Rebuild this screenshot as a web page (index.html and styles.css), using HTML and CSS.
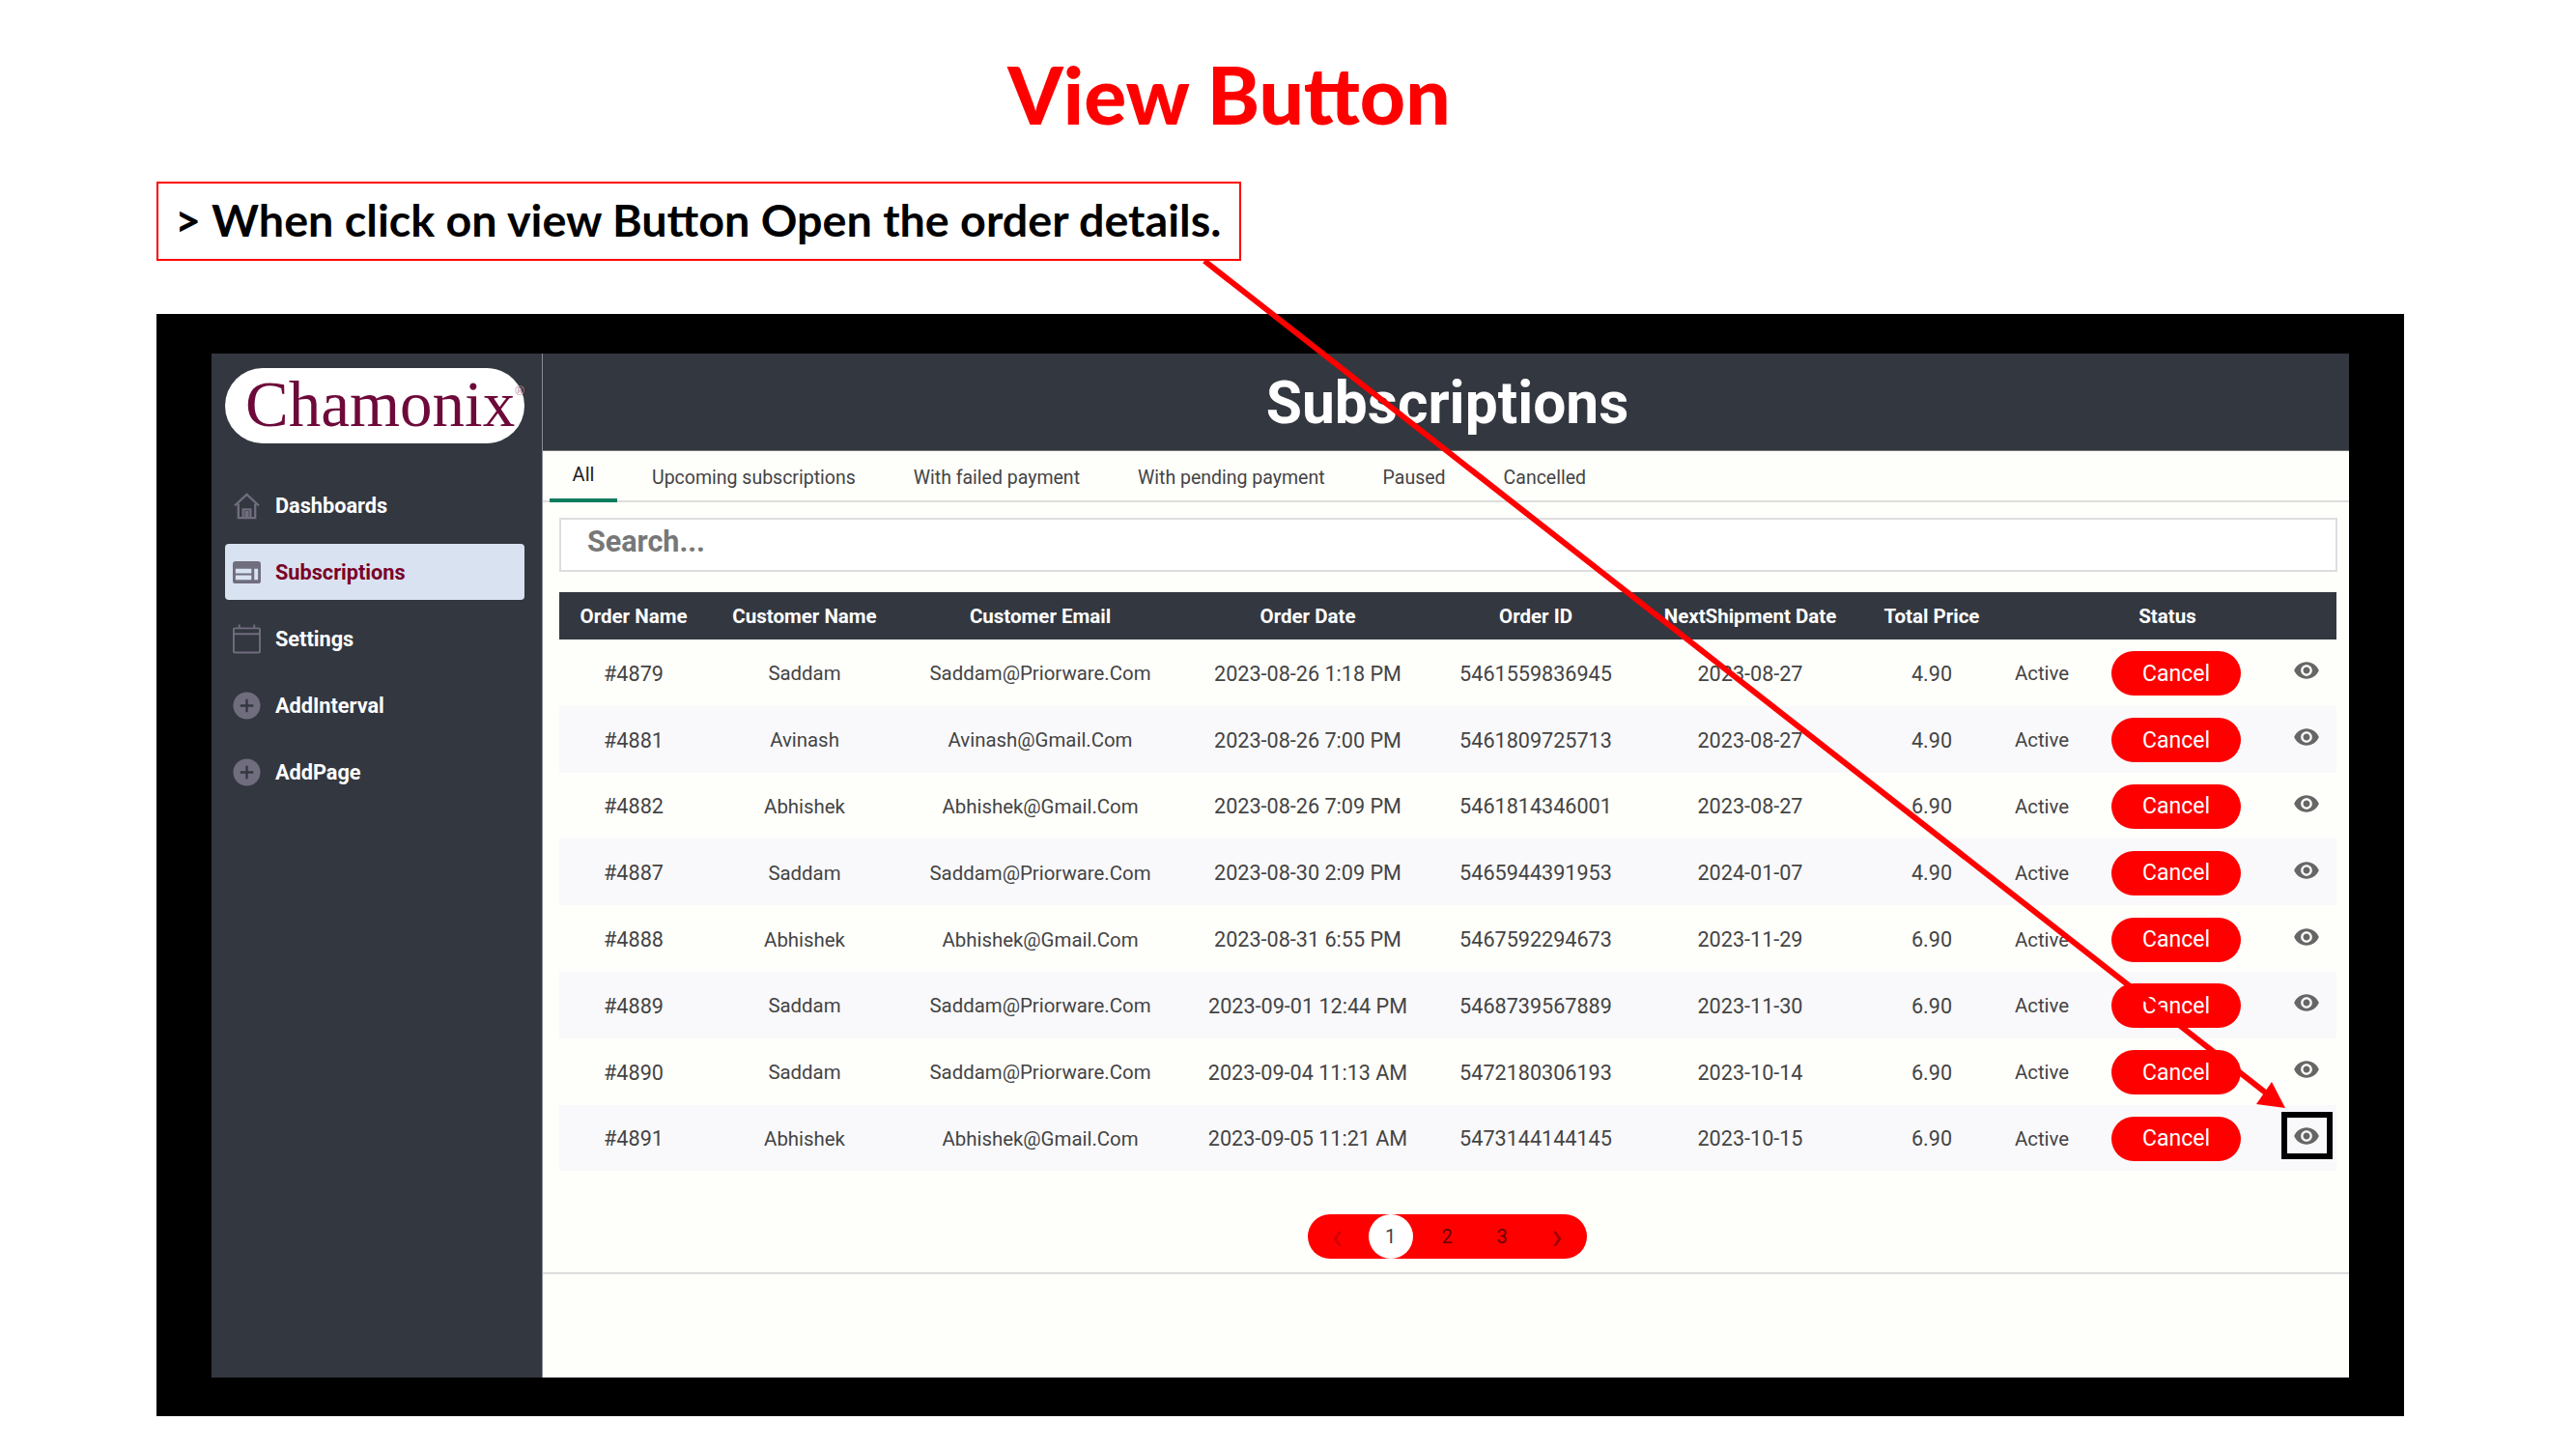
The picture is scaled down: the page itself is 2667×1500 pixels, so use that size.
FILE: index.html
```html
<!DOCTYPE html>
<html lang="en">
<head>
    <meta charset="UTF-8">
    <title>View Button</title>
    <link rel="stylesheet" href="styles.css">
</head>
<body>
<svg class="defs">
    <symbol id="eye" viewBox="0 0 24 24"><path d="M12 4.5C7 4.5 2.73 7.61 1 12c1.73 4.39 6 7.5 11 7.5s9.27-3.11 11-7.5c-1.73-4.39-6-7.5-11-7.5zM12 17c-2.76 0-5-2.24-5-5s2.24-5 5-5 5 2.24 5 5-2.24 5-5 5zm0-8c-1.66 0-3 1.34-3 3s1.34 3 3 3 3-1.34 3-3-1.34-3-3-3z"/></symbol>
    <symbol id="plus" viewBox="0 0 30 30"><circle cx="15" cy="15" r="14.5"/><path d="M15 8v14M8 15h14" stroke="#33373f" stroke-width="2.4"/></symbol>
</svg>

<h1 class="page-title">View Button</h1>
<p class="note">&gt; When click on view Button Open the order details.</p>

<div class="frame">
    <div class="app">
        <aside class="sidebar">
            <div class="logo">Chamonix<span class="reg">®</span></div>
            <ul class="nav">
                <li>
                    <svg class="nav-icon" viewBox="0 0 30 30"><path d="M2 15 15 3l13 12M6 13v15h18V13M11 28v-9h8v9M14 28v-6h2v6" fill="none" stroke="currentColor" stroke-width="2.4"/></svg>
                    Dashboards
                </li>
                <li class="active">
                    <svg class="nav-icon" viewBox="0 0 30 24"><rect width="30" height="24" rx="3"/><path d="M3 8h17v5H3zM3 15h17v5H3zM23 8h4v12h-4z" fill="#d9e2f1"/></svg>
                    Subscriptions
                </li>
                <li>
                    <svg class="nav-icon tall" viewBox="0 0 30 32"><path d="M2 5h26a1 1 0 0 1 1 1v24a1 1 0 0 1-1 1H2a1 1 0 0 1-1-1V6a1 1 0 0 1 1-1zM1 11h28M7 1v4M23 1v4" fill="none" stroke="currentColor" stroke-width="2"/></svg>
                    Settings
                </li>
                <li><svg class="nav-icon"><use href="#plus"/></svg> AddInterval</li>
                <li><svg class="nav-icon"><use href="#plus"/></svg> AddPage</li>
            </ul>
        </aside>

        <main class="main">
            <header class="main-head">Subscriptions</header>
            <nav class="tabs">
                <a class="tab current">All</a>
                <a class="tab">Upcoming subscriptions</a>
                <a class="tab">With failed payment</a>
                <a class="tab">With pending payment</a>
                <a class="tab">Paused</a>
                <a class="tab">Cancelled</a>
            </nav>
            <div class="content">
                <div class="search">Search...</div>
                <table class="orders">
                    <colgroup>
                        <col class="c-order"><col class="c-name"><col class="c-email"><col class="c-date"><col class="c-id">
                        <col class="c-next"><col class="c-total"><col class="c-state"><col class="c-btn"><col class="c-eye">
                    </colgroup>
                    <thead>
                        <tr>
                            <th>Order Name</th><th>Customer Name</th><th>Customer Email</th><th>Order Date</th><th>Order ID</th>
                            <th>NextShipment Date</th><th>Total Price</th><th></th><th class="status-head">Status</th><th></th>
                        </tr>
                    </thead>
                    <tbody>
                        <tr>
                            <td class="num">#4879</td><td>Saddam</td><td>Saddam@Priorware.Com</td><td class="num">2023-08-26 1:18 PM</td><td class="num">5461559836945</td>
                            <td class="num">2023-08-27</td><td class="num">4.90</td><td>Active</td><td><button class="cancel">Cancel</button></td>
                            <td class="eye-cell"><svg class="eye"><use href="#eye"/></svg></td>
                        </tr>
                        <tr>
                            <td class="num">#4881</td><td>Avinash</td><td>Avinash@Gmail.Com</td><td class="num">2023-08-26 7:00 PM</td><td class="num">5461809725713</td>
                            <td class="num">2023-08-27</td><td class="num">4.90</td><td>Active</td><td><button class="cancel">Cancel</button></td>
                            <td class="eye-cell"><svg class="eye"><use href="#eye"/></svg></td>
                        </tr>
                        <tr>
                            <td class="num">#4882</td><td>Abhishek</td><td>Abhishek@Gmail.Com</td><td class="num">2023-08-26 7:09 PM</td><td class="num">5461814346001</td>
                            <td class="num">2023-08-27</td><td class="num">6.90</td><td>Active</td><td><button class="cancel">Cancel</button></td>
                            <td class="eye-cell"><svg class="eye"><use href="#eye"/></svg></td>
                        </tr>
                        <tr>
                            <td class="num">#4887</td><td>Saddam</td><td>Saddam@Priorware.Com</td><td class="num">2023-08-30 2:09 PM</td><td class="num">5465944391953</td>
                            <td class="num">2024-01-07</td><td class="num">4.90</td><td>Active</td><td><button class="cancel">Cancel</button></td>
                            <td class="eye-cell"><svg class="eye"><use href="#eye"/></svg></td>
                        </tr>
                        <tr>
                            <td class="num">#4888</td><td>Abhishek</td><td>Abhishek@Gmail.Com</td><td class="num">2023-08-31 6:55 PM</td><td class="num">5467592294673</td>
                            <td class="num">2023-11-29</td><td class="num">6.90</td><td>Active</td><td><button class="cancel">Cancel</button></td>
                            <td class="eye-cell"><svg class="eye"><use href="#eye"/></svg></td>
                        </tr>
                        <tr>
                            <td class="num">#4889</td><td>Saddam</td><td>Saddam@Priorware.Com</td><td class="num">2023-09-01 12:44 PM</td><td class="num">5468739567889</td>
                            <td class="num">2023-11-30</td><td class="num">6.90</td><td>Active</td><td><button class="cancel">Cancel</button></td>
                            <td class="eye-cell"><svg class="eye"><use href="#eye"/></svg></td>
                        </tr>
                        <tr>
                            <td class="num">#4890</td><td>Saddam</td><td>Saddam@Priorware.Com</td><td class="num">2023-09-04 11:13 AM</td><td class="num">5472180306193</td>
                            <td class="num">2023-10-14</td><td class="num">6.90</td><td>Active</td><td><button class="cancel">Cancel</button></td>
                            <td class="eye-cell"><svg class="eye"><use href="#eye"/></svg></td>
                        </tr>
                        <tr>
                            <td class="num">#4891</td><td>Abhishek</td><td>Abhishek@Gmail.Com</td><td class="num">2023-09-05 11:21 AM</td><td class="num">5473144144145</td>
                            <td class="num">2023-10-15</td><td class="num">6.90</td><td>Active</td><td><button class="cancel">Cancel</button></td>
                            <td class="eye-cell"><span class="eye-box"><svg class="eye"><use href="#eye"/></svg></span></td>
                        </tr>
                    </tbody>
                </table>
            </div>
            <div class="pager-bar">
                <div class="pager">
                    <span class="page-item faint">‹</span>
                    <span class="page-item"><b class="page-on">1</b></span>
                    <span class="page-item">2</span>
                    <span class="page-item">3</span>
                    <span class="page-item arrow">›</span>
                </div>
            </div>
        </main>
    </div>
</div>

<!-- annotation arrow, lies over the whole page -->
<svg class="callout" viewBox="0 0 2667 1500">
    <path d="M1247 270 2348 1133" stroke="#f00" stroke-width="6" fill="none"/>
    <path d="M2366 1147 2336 1143 2352 1120z" fill="#f00"/>
</svg>
</body>
</html>
```

FILE: styles.css
```css
* {
    padding: 0;
    margin: 0;
    box-sizing: border-box;
}

body {
    position: relative;
    width: 2667px;
    height: 1500px;
    background: #fff;
    font-family: Roboto, "Noto Sans", sans-serif;
    overflow: hidden;
}

ul {
    list-style: none;
}

.defs {
    display: none;
}

.page-title {
    height: 188px;
    padding: 47px 122px 0 0;
    text-align: center;
    font-family: Lato, sans-serif;
    font-size: 82px;
    line-height: 100px;
    font-weight: 900;
    color: #f00;
}

.note {
    width: 1123px;
    height: 82px;
    margin-left: 162px;
    padding-left: 17px;
    border: 2px solid #f00;
    font-family: Lato, sans-serif;
    font-size: 46.7px;
    line-height: 74px;
    font-weight: 700;
    color: #000;
    white-space: nowrap;
}

.frame {
    width: 2327px;
    height: 1141px;
    margin: 55px 0 0 162px;
    padding: 41px 57px 40px 57px;
    background: #000;
}

.app {
    display: flex;
    height: 1060px;
    background: #33373f;
}

/* sidebar */
.sidebar {
    width: 343px;
    padding: 15px 18px 0 14px;
    border-right: 1px solid #8a8d93;
}

.logo {
    width: 310px;
    height: 78px;
    padding-left: 21px;
    border-radius: 39px;
    background: #fff;
    font-family: "Liberation Serif", serif;
    font-size: 67px;
    line-height: 74px;
    color: #6d0a3a;
    white-space: nowrap;
}

.reg {
    font-family: "Liberation Sans", sans-serif;
    font-size: 13px;
    line-height: 13px;
    vertical-align: 32px;
    color: #b98aa0;
}

.nav {
    margin-top: 35px;
}

.nav li {
    display: flex;
    align-items: center;
    gap: 15px;
    height: 58px;
    margin-bottom: 11px;
    padding-left: 8px;
    border-radius: 4px;
    font-size: 21.7px;
    font-weight: 700;
    color: #fff;
}

.nav li.active {
    background: #d9e2f1;
    color: #7a0026;
}

.nav-icon {
    flex: none;
    width: 29px;
    height: 29px;
    fill: #6f6d7e;
    color: #6f6d7e;
}

.nav-icon.tall {
    height: 32px;
}

/* main column */
.main {
    flex: 1;
    display: flex;
    flex-direction: column;
    background: #fefefb;
}

.main-head {
    height: 101px;
    padding-left: 3px;
    border-bottom: 1px solid #777;
    background: #33373f;
    text-align: center;
    font-size: 60.5px;
    line-height: 104px;
    font-weight: 700;
    color: #fff;
}

.tabs {
    display: flex;
    height: 53px;
    padding-left: 7px;
    border-bottom: 2px solid #ddd;
}

.tab {
    padding: 0 30px;
    font-size: 19.5px;
    line-height: 55px;
    color: #444;
}

.tab.current {
    width: 70px;
    margin-right: 6px;
    padding: 0;
    border-bottom: 4px solid #0d7d5f;
    height: 53px;
    font-size: 20px;
    line-height: 49px;
    text-align: center;
    color: #222;
}

.content {
    padding: 16px 12px 0 17px;
}

.search {
    height: 56px;
    padding-left: 27px;
    border: 2px solid #ddd;
    background: #fff;
    font-size: 30.5px;
    line-height: 46px;
    font-weight: 700;
    color: #777;
}

/* orders table */
.orders {
    width: 1840px;
    margin-top: 21px;
    border-collapse: collapse;
    table-layout: fixed;
}

.c-order { width: 154px; }
.c-name { width: 200px; }
.c-email { width: 288px; }
.c-date { width: 266px; }
.c-id { width: 206px; }
.c-next { width: 238px; }
.c-total { width: 138px; }
.c-state { width: 90px; }
.c-btn { width: 186px; }
.c-eye { width: 74px; }

.orders th {
    height: 49px;
    background: #33373f;
    font-size: 20.5px;
    font-weight: 700;
    color: #fff;
    white-space: nowrap;
}

.orders .status-head {
    padding-right: 16px;
}

.orders td {
    height: 68.8px;
    padding-top: 2px;
    text-align: center;
    font-size: 20.4px;
    color: #444;
    white-space: nowrap;
}

.orders .num {
    font-size: 21.6px;
}

.orders tbody tr:nth-child(even) {
    background: #f9f9fb;
}

.cancel {
    display: block;
    width: 134px;
    height: 46px;
    margin: 0 0 0 27px;
    border: 0;
    border-radius: 23px;
    background: #f00;
    font-family: inherit;
    font-size: 23px;
    color: #fff;
}

.orders .eye-cell {
    padding: 0 0 4px 12px;
}

.eye {
    display: block;
    width: 28px;
    height: 28px;
    margin: 0 auto;
    fill: #666;
}

.eye-box {
    display: flex;
    align-items: center;
    justify-content: center;
    width: 53px;
    height: 49px;
    margin: 0 auto;
    border: 6px solid #000;
    background: #f9f9fb;
}

/* pagination */
.pager-bar {
    display: flex;
    justify-content: center;
    height: 107px;
    padding: 45px 0 0 2px;
    border-bottom: 2px solid #ddd;
}

.pager {
    display: flex;
    align-items: center;
    justify-content: center;
    width: 289px;
    height: 46px;
    border-radius: 23px;
    background: #f00;
    font-size: 20px;
    color: #600;
}

.page-item {
    display: flex;
    align-items: center;
    justify-content: center;
    width: 57px;
}

.page-item.faint {
    font-size: 38px;
    line-height: 38px;
    color: #d30000;
}

.page-item.arrow {
    font-size: 38px;
    line-height: 38px;
    color: #900;
}

.page-on {
    width: 46px;
    height: 46px;
    margin-right: 3px;
    border-radius: 50%;
    background: #fff;
    font-weight: 400;
    line-height: 46px;
    text-align: center;
    color: #3a4450;
}

/* arrow over everything */
.callout {
    position: absolute;
    left: 0;
    top: 0;
    width: 2667px;
    height: 1500px;
    pointer-events: none;
}
```
